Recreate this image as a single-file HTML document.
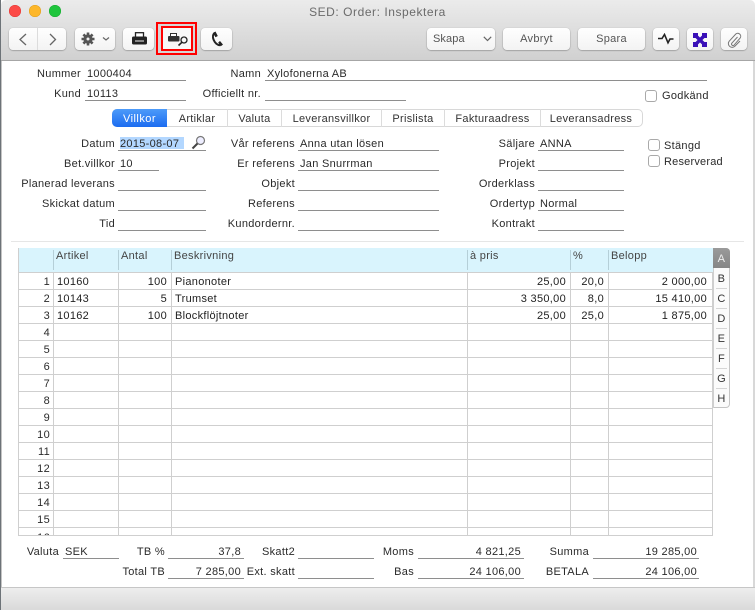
<!DOCTYPE html>
<html><head><meta charset="utf-8"><style>
html,body{margin:0;padding:0;width:755px;height:610px;overflow:hidden;background:#fff}
body{position:relative;font-family:"Liberation Sans",sans-serif;font-size:11px;color:#2a2a2a;letter-spacing:.3px}
#w{left:0;top:0;width:755px;height:610px;overflow:hidden;background:#fff;filter:blur(.3px)}
div,svg{position:absolute}
.t{white-space:nowrap;line-height:14px;height:14px}
.r{text-align:right}
.u{height:1px;background:#8e8e8e}
.b{top:28px;height:22px;box-sizing:border-box;background:linear-gradient(#fefefe,#f3f3f3);border-radius:4px;box-shadow:0 .5px 1.5px rgba(0,0,0,.4);text-align:center;line-height:22px;color:#555}
.cb{width:10px;height:10px;border:1px solid #a9a9a9;border-radius:3px;background:#fff}
.tab{top:109px;height:18px;line-height:20px;text-align:center;color:#333;box-sizing:border-box;border-right:1px solid #dcdcdc}
.gl{top:248px;width:1px;height:287px;background:#cfcfcf}
.gh{top:250px;width:1px;height:20px;background:#b5cfd8}
.hd{top:249px;color:#444}
.n{left:18px;width:32px;text-align:right}
.cell{color:#222}
.at{left:713px;width:17px;text-align:center;color:#333;font-size:11px}
.as{left:716px;width:11px;height:1px;background:#d5d5d5}
</style></head><body><div id="w">
<!-- window frame -->
<div style="left:0;top:0;width:1px;height:610px;background:#6d7378"></div>
<div style="left:1px;top:61px;width:1px;height:526px;background:#c4c4c4"></div>
<div style="left:753px;top:61px;width:2px;height:526px;background:#d8d8d8"></div>
<div style="left:1px;top:0;width:754px;height:61px;box-sizing:border-box;background:linear-gradient(#ebebeb,#d0d0d0);border-bottom:1px solid #a6a6a6;border-radius:5px 5px 0 0"></div>
<div style="left:1px;top:587px;width:754px;height:23px;box-sizing:border-box;background:linear-gradient(#ededed,#d9d9d9);border-top:1px solid #c6c6c6"></div>
<!-- traffic lights -->
<div style="left:9px;top:5px;width:12px;height:12px;border-radius:50%;background:#fc4a47;box-shadow:inset 0 0 0 .5px #df3a37"></div>
<div style="left:29px;top:5px;width:12px;height:12px;border-radius:50%;background:#fdb72a;box-shadow:inset 0 0 0 .5px #dd9d20"></div>
<div style="left:49px;top:5px;width:12px;height:12px;border-radius:50%;background:#1fc53d;box-shadow:inset 0 0 0 .5px #1aa932"></div>
<div class="t" style="left:0;width:755px;top:5px;text-align:center;font-size:12px;color:#6b6b6b;letter-spacing:.55px">SED: Order: Inspektera</div>
<!-- toolbar -->
<div class="b" style="left:9px;width:57px"></div>
<div style="left:37px;top:28px;width:1px;height:22px;background:#dcdcdc"></div>
<svg style="left:17px;top:32px" width="44" height="15" fill="none" stroke="#666" stroke-width="1.3"><path d="M9 2 3 7.500 9 13M33 2l5.500 5.500L33 13"/></svg>
<div class="b" style="left:75px;width:40px"></div>
<svg style="left:81px;top:32px" width="30" height="14" viewBox="0 0 30 14"><g stroke="#555" stroke-width="2.6"><path d="M7 .5v13M.5 7h13M2.400 2.400l9.200 9.200M11.600 2.400l-9.200 9.200"/></g><circle cx="7" cy="7" r="4.600" fill="#555"/><circle cx="7" cy="7" r="1.500" fill="#eee"/><path d="M22 5.500 25 8 28 5.500" fill="none" stroke="#666" stroke-width="1.200"/></svg>
<div class="b" style="left:123px;width:31px"></div>
<svg style="left:132px;top:32px" width="15" height="13" viewBox="0 0 15 13"><rect x="3.500" y=".7" width="8" height="5" fill="#fff" stroke="#222" stroke-width="1.300"/><rect x="0" y="4.500" width="15" height="8" rx="1.500" fill="#222"/><rect x="3" y="8.500" width="9" height="1" fill="#eee"/></svg>
<div style="left:156px;top:22px;width:41px;height:33px;box-sizing:border-box;border:2px solid #f00;background:#d6d6d6"></div>
<div style="left:161px;top:26px;width:32px;height:25px;box-sizing:border-box;border:2px solid #f00;background:#f8f8f8"></div>
<svg style="left:167px;top:32px" width="22" height="15" viewBox="0 0 22 15"><rect x="3.500" y="1.500" width="6" height="4" fill="#fff" stroke="#333" stroke-width="1"/><rect x="1" y="4" width="11.500" height="5.500" rx="1" fill="#333"/><circle cx="17" cy="8" r="3" fill="none" stroke="#222" stroke-width="1.300"/><path d="M15 10.200 11.500 13.500" stroke="#222" stroke-width="1.600"/></svg>
<div class="b" style="left:201px;width:31px"></div>
<svg style="left:210px;top:31px" width="14" height="16" viewBox="0 0 14 16"><path d="M4.800 2C2.800 3.200 2.500 6 3.600 8.700 4.800 11.600 7 14 10.300 14.300" fill="none" stroke="#222" stroke-width="2"/><path d="M3 2 5.500.5 7.800 5 5.500 6.300zM8.200 11.500 10 10l3 3.600-2.300 1.700z" fill="#222"/></svg>
<div class="b" style="left:427px;width:68px;text-align:left;padding-left:6px;letter-spacing:.1px">Skapa</div>
<svg style="left:483px;top:36px" width="9" height="6"><path d="M.8.800 4.500 4.500 8.200.800" fill="none" stroke="#666" stroke-width="1.200"/></svg>
<div class="b" style="left:503px;width:67px">Avbryt</div>
<div class="b" style="left:578px;width:67px">Spara</div>
<div class="b" style="left:653px;width:26px"></div>
<svg style="left:658px;top:33px" width="16" height="12" viewBox="0 0 16 12"><path d="M0 5.500h4L6.500 1.500 10 9.800 12 6h3.500" fill="none" stroke="#222" stroke-width="1.600"/></svg>
<div class="b" style="left:687px;width:26px"></div>
<svg style="left:693px;top:33px" width="14" height="14" viewBox="0 0 14 14" fill="#3a10b8"><path d="M2 2 12 12M12 2 2 12" stroke="#3a10b8" stroke-width="3.400"/><rect width="5" height="5"/><rect x="9" width="5" height="5"/><rect y="9" width="5" height="5"/><rect x="9" y="9" width="5" height="5"/></svg>
<div class="b" style="left:721px;width:26px"></div>
<svg style="left:727px;top:32px" width="16" height="16" viewBox="0 0 16 16"><path d="M10.500 5 4.800 11.200a1.500 1.500 0 0 0 2.200 2L13.200 6a3 3 0 0 0-4.400-4L2.200 9.200a3.800 3.800 0 0 0 5.500 5.200L13 9" fill="none" stroke="#777" stroke-width="1"/></svg>

<!-- top fields -->
<div class="t r" style="right:674px;top:67px">Nummer</div><div class="t" style="left:87px;top:67px">1000404</div><div class="u" style="left:85px;top:80px;width:101px"></div>
<div class="t r" style="right:674px;top:87px">Kund</div><div class="t" style="left:87px;top:87px">10113</div><div class="u" style="left:85px;top:100px;width:101px"></div>
<div class="t r" style="right:494px;top:67px">Namn</div><div class="t" style="left:267px;top:67px">Xylofonerna AB</div><div class="u" style="left:265px;top:80px;width:442px"></div>
<div class="t r" style="right:494px;top:87px">Officiellt nr.</div><div class="u" style="left:265px;top:100px;width:141px"></div>
<div class="cb" style="left:645px;top:90px"></div><div class="t" style="left:662px;top:89px">Godkänd</div>

<!-- tabs -->
<div style="left:112px;top:109px;width:531px;height:18px;box-sizing:border-box;border:1px solid #d8d8d8;border-radius:5px;background:#fff"></div>
<div class="tab" style="left:112px;width:55px;background:linear-gradient(#4d9bf9,#1c6cf0);color:#fff;border-radius:5px 0 0 5px;border:0;letter-spacing:.45px">Villkor</div>
<div class="tab" style="left:167px;width:61px">Artiklar</div>
<div class="tab" style="left:228px;width:54px">Valuta</div>
<div class="tab" style="left:282px;width:100px">Leveransvillkor</div>
<div class="tab" style="left:382px;width:63px">Prislista</div>
<div class="tab" style="left:445px;width:96px">Fakturaadress</div>
<div class="tab" style="left:541px;width:100px;border:0">Leveransadress</div>

<!-- mid fields col 1 -->
<div class="t r" style="right:640px;top:137px">Datum</div><div style="left:120px;top:137px;width:64px;height:12px;background:#b3d7ff"></div><div class="t" style="left:120px;top:137px">2015-08-07</div>
<svg style="left:191px;top:135px" width="15" height="15" viewBox="0 0 15 15"><circle cx="9.500" cy="5.500" r="4" fill="#eef" stroke="#777" stroke-width="1.200"/><path d="M6.500 8.500 1.500 13.500" stroke="#444" stroke-width="2"/></svg>
<div class="u" style="left:118px;top:150px;width:88px"></div>
<div class="t r" style="right:640px;top:157px">Bet.villkor</div><div class="t" style="left:120px;top:157px">10</div><div class="u" style="left:118px;top:170px;width:41px"></div>
<div class="t r" style="right:640px;top:177px">Planerad leverans</div><div class="u" style="left:118px;top:190px;width:88px"></div>
<div class="t r" style="right:640px;top:197px">Skickat datum</div><div class="u" style="left:118px;top:210px;width:88px"></div>
<div class="t r" style="right:640px;top:217px">Tid</div><div class="u" style="left:118px;top:230px;width:88px"></div>
<!-- col 2 -->
<div class="t r" style="right:460px;top:137px">Vår referens</div><div class="t" style="left:300px;top:137px">Anna utan lösen</div><div class="u" style="left:298px;top:150px;width:141px"></div>
<div class="t r" style="right:460px;top:157px">Er referens</div><div class="t" style="left:300px;top:157px">Jan Snurrman</div><div class="u" style="left:298px;top:170px;width:141px"></div>
<div class="t r" style="right:460px;top:177px">Objekt</div><div class="u" style="left:298px;top:190px;width:141px"></div>
<div class="t r" style="right:460px;top:197px">Referens</div><div class="u" style="left:298px;top:210px;width:141px"></div>
<div class="t r" style="right:460px;top:217px">Kundordernr.</div><div class="u" style="left:298px;top:230px;width:141px"></div>
<!-- col 3 -->
<div class="t r" style="right:220px;top:137px">Säljare</div><div class="t" style="left:540px;top:137px">ANNA</div><div class="u" style="left:538px;top:150px;width:86px"></div>
<div class="t r" style="right:220px;top:157px">Projekt</div><div class="u" style="left:538px;top:170px;width:86px"></div>
<div class="t r" style="right:220px;top:177px">Orderklass</div><div class="u" style="left:538px;top:190px;width:86px"></div>
<div class="t r" style="right:220px;top:197px">Ordertyp</div><div class="t" style="left:540px;top:197px">Normal</div><div class="u" style="left:538px;top:210px;width:86px"></div>
<div class="t r" style="right:220px;top:217px">Kontrakt</div><div class="u" style="left:538px;top:230px;width:86px"></div>
<div class="cb" style="left:648px;top:139px"></div><div class="t" style="left:664px;top:139px">Stängd</div>
<div class="cb" style="left:648px;top:155px"></div><div class="t" style="left:664px;top:155px;letter-spacing:.2px">Reserverad</div>

<div style="left:11px;top:241px;width:733px;height:1px;background:#e6e6e6"></div>

<!-- grid -->
<div style="left:18px;top:248px;width:695px;height:24px;background:#d9f4fd"></div>
<div style="left:18px;top:272px;width:695px;height:263px;background:repeating-linear-gradient(#cfcfcf 0 1px,#fff 1px 17px)"></div>
<div style="left:18px;top:248px;width:1px;height:287px;background:#cfcfcf"></div>
<div style="left:712px;top:272px;width:1px;height:263px;background:#cfcfcf"></div>
<div style="left:18px;top:535px;width:695px;height:1px;background:#cfcfcf"></div>
<div class="gl" style="left:53px;top:272px;height:263px"></div><div class="gl" style="left:118px;top:272px;height:263px"></div><div class="gl" style="left:171px;top:272px;height:263px"></div><div class="gl" style="left:467px;top:272px;height:263px"></div><div class="gl" style="left:570px;top:272px;height:263px"></div><div class="gl" style="left:608px;top:272px;height:263px"></div>
<div class="gh" style="left:53px"></div><div class="gh" style="left:118px"></div><div class="gh" style="left:171px"></div><div class="gh" style="left:467px"></div><div class="gh" style="left:570px"></div><div class="gh" style="left:608px"></div>
<div class="t hd" style="left:56px">Artikel</div><div class="t hd" style="left:121px">Antal</div><div class="t hd" style="left:174px">Beskrivning</div><div class="t hd" style="left:470px">à pris</div><div class="t hd" style="left:573px">%</div><div class="t hd" style="left:611px">Belopp</div>

<div class="t n" style="top:275px">1</div><div class="t n" style="top:292px">2</div><div class="t n" style="top:309px">3</div><div class="t n" style="top:326px">4</div><div class="t n" style="top:343px">5</div><div class="t n" style="top:360px">6</div><div class="t n" style="top:377px">7</div><div class="t n" style="top:394px">8</div><div class="t n" style="top:411px">9</div><div class="t n" style="top:428px">10</div><div class="t n" style="top:445px">11</div><div class="t n" style="top:462px">12</div><div class="t n" style="top:479px">13</div><div class="t n" style="top:496px">14</div><div class="t n" style="top:513px">15</div>
<div style="left:18px;top:528px;width:34px;height:7px;overflow:hidden"><div class="t" style="left:0;width:32px;text-align:right;top:3px">16</div></div>

<div class="t cell" style="left:57px;top:275px">10160</div><div class="t cell r" style="right:588px;top:275px">100</div><div class="t cell" style="left:175px;top:275px">Pianonoter</div><div class="t cell r" style="right:189px;top:275px">25,00</div><div class="t cell r" style="right:151px;top:275px">20,0</div><div class="t cell r" style="right:48px;top:275px">2 000,00</div>
<div class="t cell" style="left:57px;top:292px">10143</div><div class="t cell r" style="right:588px;top:292px">5</div><div class="t cell" style="left:175px;top:292px">Trumset</div><div class="t cell r" style="right:189px;top:292px">3 350,00</div><div class="t cell r" style="right:151px;top:292px">8,0</div><div class="t cell r" style="right:48px;top:292px">15 410,00</div>
<div class="t cell" style="left:57px;top:309px">10162</div><div class="t cell r" style="right:588px;top:309px">100</div><div class="t cell" style="left:175px;top:309px">Blockflöjtnoter</div><div class="t cell r" style="right:189px;top:309px">25,00</div><div class="t cell r" style="right:151px;top:309px">25,0</div><div class="t cell r" style="right:48px;top:309px">1 875,00</div>

<!-- alpha tabs -->
<div style="left:713px;top:248px;width:17px;height:160px;box-sizing:border-box;background:#fbfbfb;border:1px solid #c4c4c4;border-left:1px solid #cfcfcf;border-radius:0 4px 4px 0"></div>
<div style="left:713px;top:248px;width:17px;height:20px;background:linear-gradient(#9a9a9a,#858585);border-radius:0 4px 0 0"></div>
<div class="t at" style="top:252px;color:#eee">A</div><div class="t at" style="top:272px">B</div><div class="t at" style="top:292px">C</div><div class="t at" style="top:312px">D</div><div class="t at" style="top:332px">E</div><div class="t at" style="top:352px">F</div><div class="t at" style="top:372px">G</div><div class="t at" style="top:392px">H</div>
<div class="as" style="top:288px"></div><div class="as" style="top:308px"></div><div class="as" style="top:328px"></div><div class="as" style="top:348px"></div><div class="as" style="top:368px"></div><div class="as" style="top:388px"></div>

<!-- totals -->
<div class="t r" style="right:696px;top:545px">Valuta</div><div class="t" style="left:65px;top:545px">SEK</div><div class="u" style="left:63px;top:558px;width:56px"></div>
<div class="t r" style="right:590px;top:545px">TB %</div><div class="t r" style="right:514px;top:545px">37,8</div><div class="u" style="left:168px;top:558px;width:76px"></div>
<div class="t r" style="right:590px;top:565px">Total TB</div><div class="t r" style="right:514px;top:565px">7 285,00</div><div class="u" style="left:168px;top:578px;width:76px"></div>
<div class="t r" style="right:460px;top:545px">Skatt2</div><div class="u" style="left:298px;top:558px;width:76px"></div>
<div class="t r" style="right:460px;top:565px">Ext. skatt</div><div class="u" style="left:298px;top:578px;width:76px"></div>
<div class="t r" style="right:341px;top:545px">Moms</div><div class="t r" style="right:234px;top:545px">4 821,25</div><div class="u" style="left:418px;top:558px;width:106px"></div>
<div class="t r" style="right:341px;top:565px">Bas</div><div class="t r" style="right:234px;top:565px">24 106,00</div><div class="u" style="left:418px;top:578px;width:106px"></div>
<div class="t r" style="right:166px;top:545px">Summa</div><div class="t r" style="right:58px;top:545px">19 285,00</div><div class="u" style="left:593px;top:558px;width:106px"></div>
<div class="t r" style="right:166px;top:565px">BETALA</div><div class="t r" style="right:58px;top:565px">24 106,00</div><div class="u" style="left:593px;top:578px;width:106px"></div>
</div></body></html>
